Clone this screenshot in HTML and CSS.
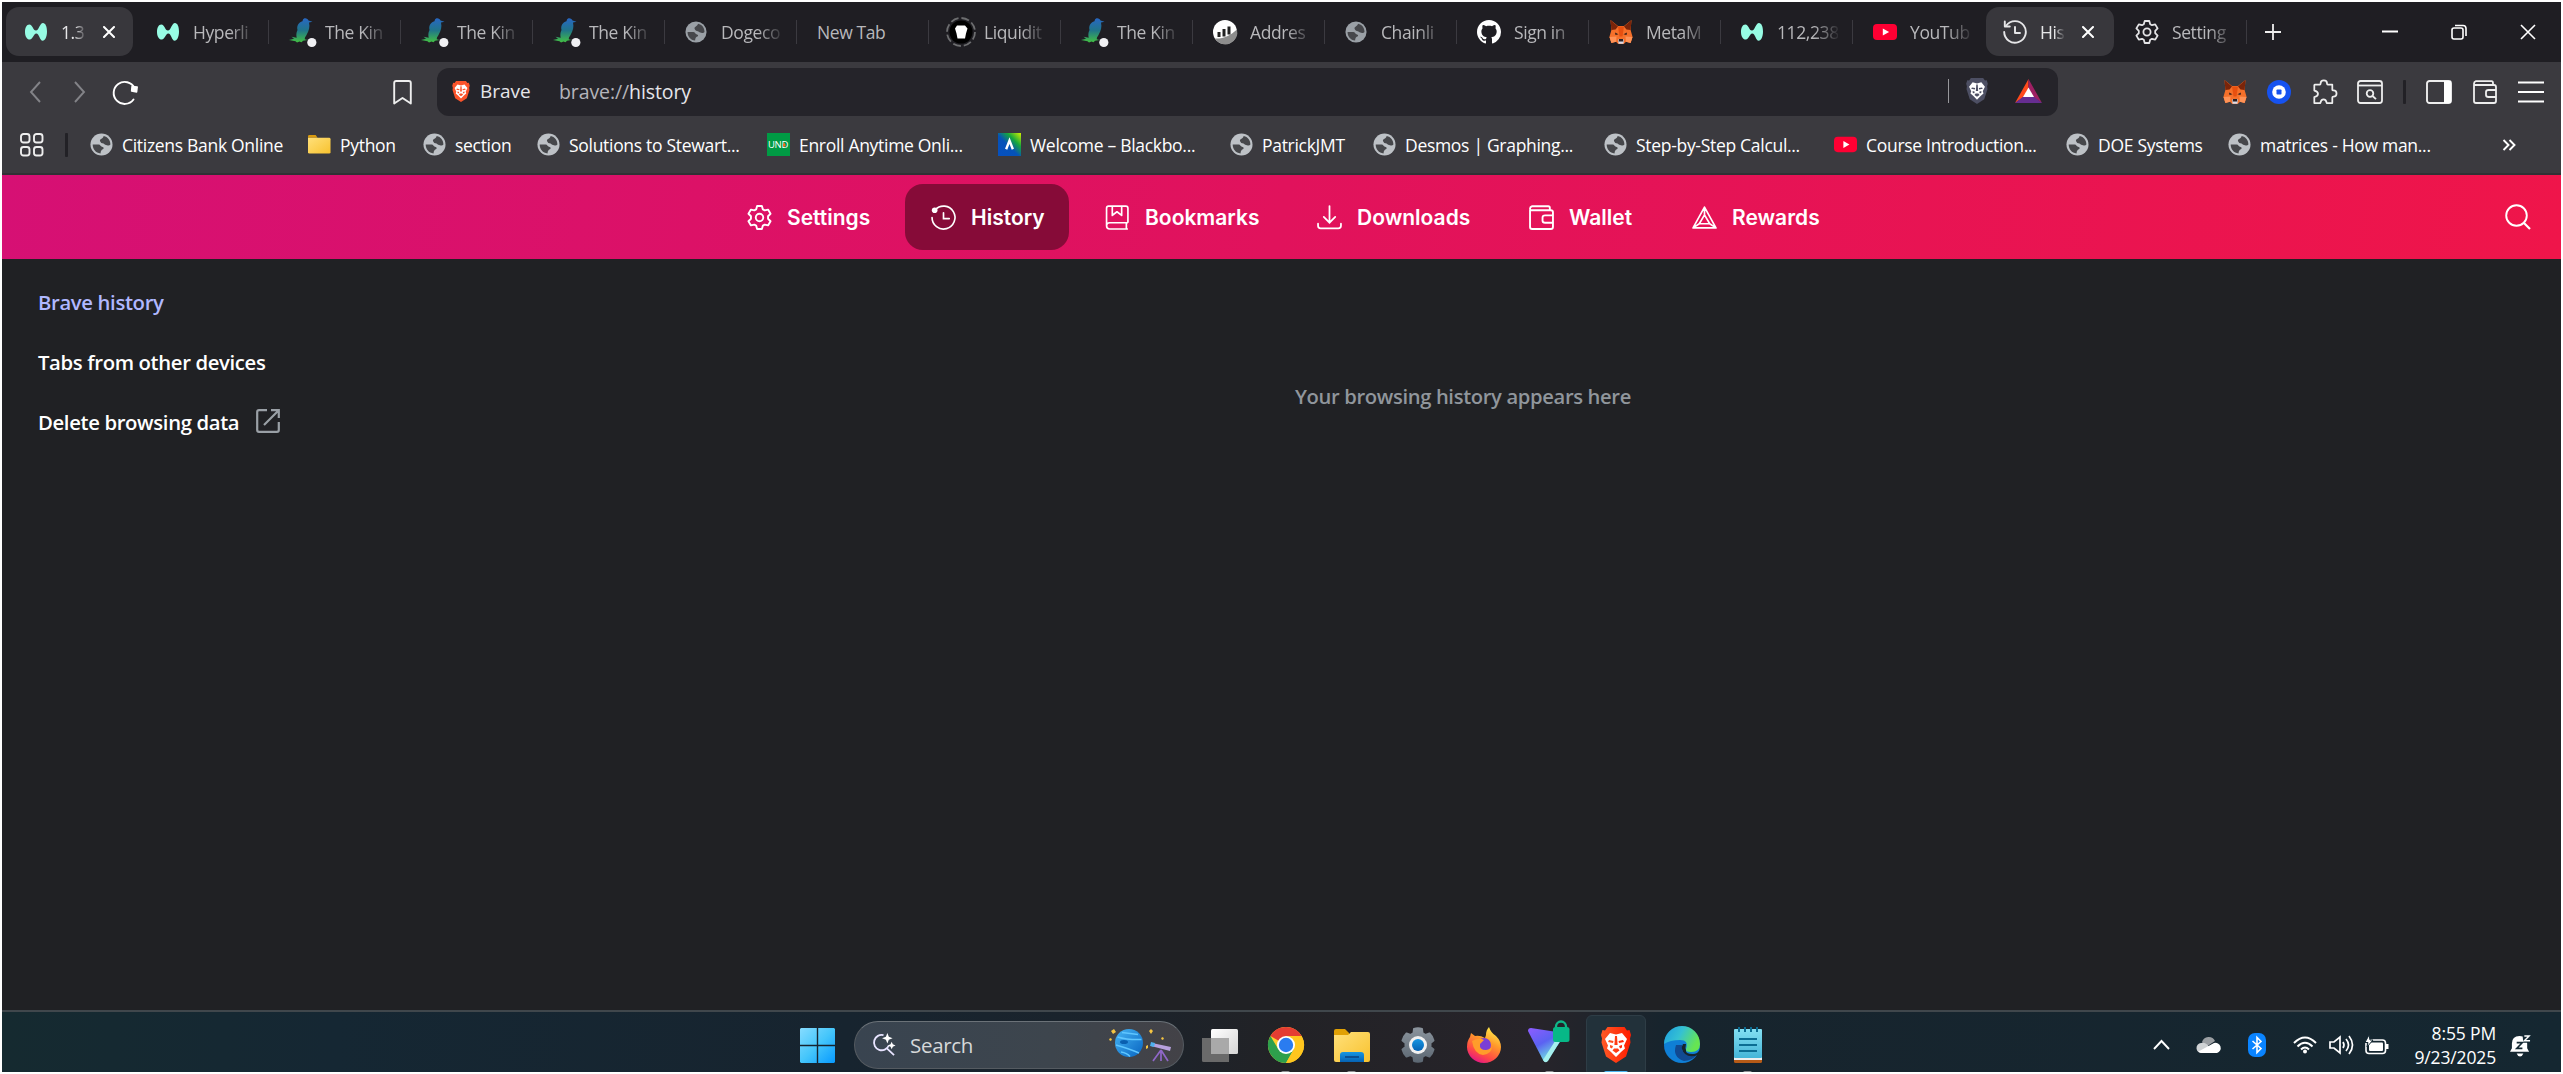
FILE: index.html
```html
<!DOCTYPE html>
<html lang="en">
<head>
<meta charset="utf-8">
<title>History</title>
<link rel="stylesheet" href="styles.css">
</head>
<body>
<svg class="defs" width="0" height="0" aria-hidden="true">
  <defs>
    <linearGradient id="birdFill" x1="0" y1="0" x2="0" y2="1"><stop offset="0" stop-color="#2867c4"/><stop offset=".5" stop-color="#20758a"/><stop offset="1" stop-color="#43c043"/></linearGradient>
    <linearGradient id="folderFill" x1="0" y1="0" x2="1" y2="1"><stop offset="0" stop-color="#ffe07a"/><stop offset="1" stop-color="#f8c22e"/></linearGradient>
    <linearGradient id="winFill" x1="0" y1="0" x2="1" y2="1"><stop offset="0" stop-color="#86dcff"/><stop offset=".5" stop-color="#45c6fb"/><stop offset="1" stop-color="#079aff"/></linearGradient>
    <linearGradient id="blueFill" x1="0" y1="0" x2="0" y2="1"><stop offset="0" stop-color="#1796e2"/><stop offset="1" stop-color="#0562b4"/></linearGradient>
    <linearGradient id="gearFill" x1="0" y1="0" x2="0" y2="1"><stop offset="0" stop-color="#8a939c"/><stop offset="1" stop-color="#5d6873"/></linearGradient>
    <linearGradient id="foxFill" x1=".8" y1="0" x2=".3" y2="1"><stop offset="0" stop-color="#fff44f"/><stop offset=".4" stop-color="#ff9a2a"/><stop offset=".75" stop-color="#ff4a45"/><stop offset="1" stop-color="#e31587"/></linearGradient>
    <linearGradient id="vpnFill" x1="0" y1="0" x2=".6" y2="1"><stop offset="0" stop-color="#8e5cff"/><stop offset=".5" stop-color="#5b62f2"/><stop offset="1" stop-color="#74f3e0"/></linearGradient>
    <linearGradient id="edgeTop" x1="0" y1="0" x2="1" y2=".4"><stop offset="0" stop-color="#1b9de2"/><stop offset=".5" stop-color="#35c1d2"/><stop offset="1" stop-color="#66e552"/></linearGradient>
    <linearGradient id="noteFill" x1="0" y1="0" x2="0" y2="1"><stop offset="0" stop-color="#83dff2"/><stop offset="1" stop-color="#45b5d8"/></linearGradient>
    <linearGradient id="planetFill" x1="0" y1="0" x2="1" y2="1"><stop offset="0" stop-color="#46b5f5"/><stop offset="1" stop-color="#0864c0"/></linearGradient>
    <linearGradient id="boardFill" x1="1" y1="0" x2="0" y2="1"><stop offset="0" stop-color="#d3f000"/><stop offset=".3" stop-color="#16a83c"/><stop offset=".55" stop-color="#0552b8"/><stop offset="1" stop-color="#0650c0"/></linearGradient>
    <linearGradient id="viewFill" x1="0" y1="0" x2="1" y2="1"><stop offset="0" stop-color="#fff"/><stop offset="1" stop-color="#d5d5d5"/></linearGradient>
    <linearGradient id="braveFill" x1="0" y1="0" x2="1" y2="0"><stop offset="0" stop-color="#ff5a26"/><stop offset="1" stop-color="#ff1d00"/></linearGradient>
  </defs>

  <symbol id="hyper" viewBox="0 0 22 22"><path fill="#97fce4" d="M22 10.500c0 5.500-2 9.300-4.300 9.300-3 0-3.500-7.200-6.500-7.200-2.600 0-3.200 6-6.400 6C1.800 18.600 0 15.200 0 11s1.600-7.500 4.300-7.500C7.700 3.500 8 9.600 11 9.600c2.800 0 3.700-7.600 7-7.600 2.400 0 4 3.500 4 8.500z"/></symbol>
  <symbol id="globe" viewBox="0 0 24 24"><circle cx="12" cy="12" r="11.500" fill="currentColor"/><path fill="#46474b" d="M2.800 12H9c2 0 2 2.300 4.200 2.600 1.600.3 1.300 1.800.2 2.400-1.500.8-2.200 1.600-2.400 4.300C6 20.800 2.800 17 2.800 12zM14.300 3.100C18.500 4 21.300 7.500 21.300 12c-.8 1-1.600 1.300-2.700 1-1.200-.5-2.600-.2-3.500-1.300-1-1.200-3.400-.4-4.100-2.200-.5-1.400-1.400-2.300.5-3.300 1.400-.7 2-1.200 2.800-3.100z"/></symbol>
  <symbol id="bird" viewBox="0 0 28 30"><path fill="url(#birdFill)" d="M15.500.3c2-.3 3.400.7 4 2.200l4 1.300-3.500.8c1 4.500.1 8-2.500 12.400l-1.500 2.500-.3 1.700 2.800.7-4.500.9-1.500 1.400-2-.7-2.500.9-1.500-1.200L0 22l5-1.200-2.500-2 5.200 1c-.5-2.500-.6-5 .8-7.800-1-4 1-7.500 5-8.700.2-1.500.9-2.600 2-3z"/><circle cx="22.800" cy="24.500" r="4.600" fill="#f0f0f3"/></symbol>
  <symbol id="octo" viewBox="0 0 16 16"><path fill="#fff" fill-rule="evenodd" d="M8 0C3.580 0 0 3.580 0 8c0 3.540 2.290 6.530 5.470 7.590.4.070.55-.17.55-.38 0-.19-.01-.82-.01-1.490-2.010.37-2.530-.49-2.690-.94-.09-.23-.48-.94-.82-1.130-.28-.15-.68-.52-.01-.53.63-.01 1.080.58 1.230.82.72 1.210 1.870.87 2.330.66.070-.52.28-.87.51-1.070-1.780-.2-3.640-.89-3.640-3.950 0-.87.31-1.590.82-2.150-.08-.2-.36-1.020.08-2.120 0 0 .67-.21 2.200.82.640-.18 1.320-.27 2-.27s1.360.09 2 .27c1.530-1.040 2.200-.82 2.200-.82.440 1.100.16 1.920.08 2.120.51.56.82 1.270.82 2.150 0 3.070-1.870 3.750-3.650 3.950.29.25.54.73.54 1.480 0 1.070-.01 1.930-.01 2.200 0 .21.15.46.55.38A8.010 8.010 0 0 0 16 8c0-4.420-3.580-8-8-8z"/></symbol>
  <symbol id="fox" viewBox="0 0 24 24"><path fill="#f5702a" d="M1.500 0 9 6h6l7.500-6-.9 10 2 7-2 6-4.600-1.300-2.200 2.300H9.200L7 21.700 2.400 23l-2-6 2-7z"/><path fill="#7a2409" d="M1.500 0 9 6.500 6.500 9.500 2.400 10zM22.500 0 15 6.500l2.500 3 4.100.5z"/><path fill="#ff9256" d="M.5 17l7-.5-.4 5.200L2.400 23zM23.500 17l-7-.5.4 5.200 4.700 1.300z"/><path fill="#e8500f" d="M9 6.500h6l-1.500 10h-3z"/><path fill="#301c18" d="M6 12.500l3.500 1.700-3 .8zM18 12.500l-3.500 1.700 3 .8z"/><path fill="#d9dbe8" d="M9 19.500h6l-.6 4.200H9.600z"/><path fill="#2a2024" d="M10 19h4l.4 2.500H9.600z"/></symbol>
  <symbol id="tube" viewBox="0 0 24 24"><rect y="4" width="24" height="16" rx="4" fill="#ff0033"/><path d="M9.800 8.400v7.200l6.300-3.600z" fill="#fff"/></symbol>
  <symbol id="history" viewBox="0 0 24 24"><g fill="none" stroke="currentColor" stroke-width="1.900" stroke-linecap="round" stroke-linejoin="round"><path d="M3.300 5.500A10.800 10.800 0 1 1 1.200 12"/><path d="M1.800 1.500v5h5M12 7v6h5"/></g></symbol>
  <symbol id="gear" viewBox="0 0 24 24"><g fill="none" stroke="currentColor" stroke-width="1.800" stroke-linejoin="round"><path d="M9.700 1h4.600l.9 3.200 1.800 1 3.200-.8 2.400 4-2.400 2.400v2.400l2.400 2.400-2.400 4-3.200-.8-1.800 1-.9 3.200H9.700l-.9-3.200-1.800-1-3.200.8-2.400-4 2.400-2.400v-2.400L1.400 8.400l2.400-4 3.200.8 1.800-1z"/><circle cx="12" cy="12" r="3.600"/></g></symbol>
  <symbol id="x" viewBox="0 0 12 12"><path d="M1 1l10 10M11 1 1 11" stroke="currentColor" stroke-width="2" stroke-linecap="round"/></symbol>
  <symbol id="wallet" viewBox="0 0 24 24"><g fill="none" stroke="currentColor" stroke-width="1.800" stroke-linejoin="round"><path d="M1 4.500V21q0 2 2 2h18q2 0 2-2V7q0-2-2-2H2.500Q1 5 1 3.400T3 1.200h15.500q1.500 0 1.500 1.700V5M23 10h-7.500q-2.500 0-2.500 2v3q0 2 2.500 2H23"/></g></symbol>
  <symbol id="lion" viewBox="0 0 30 36"><path d="M6.500 0h17l2.500 3.500 2.500-.5 1.500 5-1 3.500.5 4-4.500 14L15 36 5 29.500.5 15.500l.5-4L0 8l1.500-5 2.500.5z"/><path fill="#fff" d="M9 6l6 1.500L21 6l5 6-3 6.500 1 3-4 3.500-5 5-5-5-4-3.500 1-3L4 12z"/><path d="M8 13l4.500 1-.5 2-5-1zM22 13l-4.500 1 .5 2 5-1zM13 21.500h4l1.500 2L15 26l-3.500-2.500zM14 9h2l.6 9h-3.200zM9 18l3 1-1 2.500-2-1zM21 18l-3 1 1 2.500 2-1z"/></symbol>
</svg>

<div class="window">
  <header class="tabs">
    <div class="tab first active"><svg class="ic"><use href="#hyper"/></svg><span class="title short">1.3</span><svg class="close"><use href="#x"/></svg></div>
    <div class="tab"><svg class="ic"><use href="#hyper"/></svg><span class="title">Hyperli</span></div>
    <div class="tab"><svg class="bird"><use href="#bird"/></svg><span class="title">The Kin</span></div>
    <div class="tab"><svg class="bird"><use href="#bird"/></svg><span class="title">The Kin</span></div>
    <div class="tab"><svg class="bird"><use href="#bird"/></svg><span class="title">The Kin</span></div>
    <div class="tab"><svg class="ic dim"><use href="#globe"/></svg><span class="title">Dogeco</span></div>
    <div class="tab"><span class="title plain">New Tab</span></div>
    <div class="tab"><svg class="coin" viewBox="0 0 30 30"><circle cx="15" cy="15" r="11.500"/><circle cx="15" cy="15" r="14" fill="none" stroke="#6d6e70" stroke-width="1.800" stroke-dasharray="8 3"/><path fill="#fff" d="M11 8.500h8l2.500 3-1.500 5-1 5h-7.500l-1-5-1.500-5z"/></svg><span class="title">Liquidit</span></div>
    <div class="tab"><svg class="bird"><use href="#bird"/></svg><span class="title">The Kin</span></div>
    <div class="tab"><svg class="ic big" viewBox="0 0 24 24"><circle cx="12" cy="12" r="12" fill="#fff"/><path fill="#8d8d8d" d="M2 18.500C10 19 17 16 24 9.500A12 12 0 0 1 2 18.500z"/><path fill="none" stroke="#222" stroke-width="3" d="M6 17v-5M11 16.500V9M16 14.500v-8"/></svg><span class="title">Addres</span></div>
    <div class="tab"><svg class="ic dim"><use href="#globe"/></svg><span class="title">Chainli</span></div>
    <div class="tab"><svg class="ic big"><use href="#octo"/></svg><span class="title">Sign in</span></div>
    <div class="tab"><svg class="ic big"><use href="#fox"/></svg><span class="title">MetaM</span></div>
    <div class="tab"><svg class="ic"><use href="#hyper"/></svg><span class="title">112,238</span></div>
    <div class="tab bare"><svg class="ic big"><use href="#tube"/></svg><span class="title">YouTub</span></div>
    <div class="tab active here"><svg class="ic big"><use href="#history"/></svg><span class="title short">His</span><svg class="close"><use href="#x"/></svg></div>
    <div class="tab last"><svg class="ic big white"><use href="#gear"/></svg><span class="title">Setting</span></div>
    <svg class="plus" viewBox="0 0 16 16"><path d="M8 0v16M0 8h16" stroke="#eee" stroke-width="1.800"/></svg>
    <div class="caption">
      <svg viewBox="0 0 16 16"><path d="M0 7.500h16" stroke="#fff" stroke-width="2"/></svg>
      <svg viewBox="0 0 16 16"><g fill="none" stroke="#fff" stroke-width="1.600"><rect x="1" y="4" width="11" height="11" rx="2"/><path d="M4 1.500h8q3 0 3 3V12"/></g></svg>
      <svg viewBox="0 0 16 16"><path d="M1 1l14 14M15 1 1 15" stroke="#fff" stroke-width="1.600"/></svg>
    </div>
  </header>

  <div class="toolbar">
    <svg class="chev" viewBox="0 0 12 22"><path d="M11 1 2 11l9 10" fill="none" stroke="#838388" stroke-width="1.900"/></svg>
    <svg class="chev fwd" viewBox="0 0 12 22"><path d="m1 1 9 10L1 21" fill="none" stroke="#838388" stroke-width="1.900"/></svg>
    <svg class="reload" viewBox="0 0 26 24"><path d="M21.500 19.500A11 11 0 1 1 22.500 8" fill="none" stroke="#fff" stroke-width="1.900" stroke-linecap="round"/><path d="M20 6.500l5.200.5-.6 5-5-1z" fill="#fff" stroke="#fff" stroke-width="1.500" stroke-linejoin="round"/></svg>
    <svg class="mark" viewBox="0 0 19 25"><path d="M1.200 3q0-2 2-2h12.600q2 0 2 2v20.500L9.500 18l-8.300 5.500z" fill="none" stroke="#eee" stroke-width="1.900" stroke-linejoin="round"/></svg>
    <div class="address">
      <svg class="shield" fill="#fb542b"><use href="#lion"/></svg>
      <span class="brand">Brave</span>
      <span class="url">brave://<b>history</b></span>
      <i class="rule"></i>
      <svg class="greylion" fill="#4d4f63"><use href="#lion"/></svg>
      <svg class="bat" viewBox="0 0 27 24"><path fill="#ff4a1c" d="M13.500 0 0 24l9.500-6.500 4-8z"/><path fill="#9e1f63" d="M13.500 0 27 24l-9.500-6.500-4-8z"/><path fill="#662d91" d="M0 24h27l-9-7H9z"/><path fill="#fff" d="M13.500 8.500 19 18H8z"/></svg>
    </div>
    <div class="extensions">
      <svg><use href="#fox"/></svg>
      <svg viewBox="0 0 24 24"><circle cx="12" cy="12" r="12" fill="#1652f0"/><circle cx="12" cy="12" r="6.800" fill="#fff"/><rect x="9.500" y="9.500" width="5" height="5" rx=".8" fill="#1652f0"/></svg>
      <svg class="wide" viewBox="0 0 26 26"><path d="M3 5h5.500q.8 0 .8-1.200a3.500 3.500 0 0 1 7 0q0 1.200.8 1.200H22v5.500q0 .8 1.200.8a3.300 3.300 0 0 1 0 6.800q-1.200 0-1.200.8V25H16q-.8-4-3.500-4T9 25H2.500v-6.500q4-.8 4-3.500t-4-3.500V5.500z" fill="none" stroke="#eee" stroke-width="1.900" stroke-linejoin="round"/></svg>
      <svg class="wide" viewBox="0 0 26 24"><g fill="none" stroke="#eee" stroke-width="1.800"><rect x="1" y="1" width="24" height="22" rx="2.500"/><path d="M1 5.500h24"/><circle cx="13" cy="13.500" r="3.300"/><path d="m15.500 16 3.500 3.200"/></g></svg>
      <i class="split"></i>
      <svg class="wide" viewBox="0 0 26 24"><rect x="1" y="1" width="24" height="22" rx="2.500" fill="none" stroke="#eee" stroke-width="1.900"/><path d="M18 1h7v22h-7z" fill="#fff"/></svg>
      <svg class="wide wal"><use href="#wallet"/></svg>
      <svg class="wide" viewBox="0 0 26 24"><path d="M0 2.500h26M0 12h26M0 21.500h26" stroke="#fff" stroke-width="1.900"/></svg>
    </div>
  </div>

  <nav class="bookmarks">
    <svg class="apps" viewBox="0 0 24 24"><g fill="none" stroke="#eee" stroke-width="1.900"><rect x="1" y="1" width="8.500" height="8.500" rx="2.500"/><rect x="14" y="1" width="8.500" height="8.500" rx="2.500"/><rect x="1" y="14" width="8.500" height="8.500" rx="2.500"/><rect x="14" y="14" width="8.500" height="8.500" rx="2.500"/></g></svg>
    <i class="split"></i>
    <a><svg><use href="#globe"/></svg>Citizens Bank Online</a>
    <a><svg viewBox="0 0 24 22"><path fill="#d99a10" d="M0 2.500Q0 1 1.500 1H8l2 3H0z"/><path fill="url(#folderFill)" d="M0 4h22q1.500 0 1.500 1.500V19q0 1.500-1.500 1.500H1.500Q0 20.500 0 19z"/></svg>Python</a>
    <a><svg><use href="#globe"/></svg>section</a>
    <a><svg><use href="#globe"/></svg>Solutions to Stewart...</a>
    <a><svg viewBox="0 0 24 24"><rect width="24" height="24" fill="#009a44"/><text x="1" y="16" class="und" textLength="21" lengthAdjust="spacingAndGlyphs">UND</text><path fill="#ff671f" d="M17 14q-1-1.500 1-4 2 2.500 1 4z"/></svg>Enroll Anytime Onli...</a>
    <a><svg viewBox="0 0 24 24"><rect width="24" height="24" fill="url(#boardFill)"/><path d="m8.500 17 3.500-9 3.500 9" fill="none" stroke="#fff" stroke-width="2.500"/></svg>Welcome – Blackbo...</a>
    <a><svg><use href="#globe"/></svg>PatrickJMT</a>
    <a><svg><use href="#globe"/></svg>Desmos | Graphing...</a>
    <a><svg><use href="#globe"/></svg>Step-by-Step Calcul...</a>
    <a><svg><use href="#tube"/></svg>Course Introduction...</a>
    <a><svg><use href="#globe"/></svg>DOE Systems</a>
    <a><svg><use href="#globe"/></svg>matrices - How man...</a>
    <svg class="more" viewBox="0 0 14 12"><path d="m1.500 1 5 5-5 5m6-10 5 5-5 5" fill="none" stroke="#fff" stroke-width="1.900"/></svg>
  </nav>

  <div class="sections">
    <a><svg><use href="#gear"/></svg>Settings</a>
    <a class="current"><svg viewBox="0 0 24 24"><g fill="none" stroke="#fff" stroke-width="1.600" stroke-linecap="round"><path d="M4 4.500A11 11 0 1 1 1 12M12 7.500V13h5.500"/></g><circle cx="3.500" cy="5" r="2.700" fill="#fff"/></svg>History</a>
    <a><svg viewBox="0 0 24 24"><g fill="none" stroke="#fff" stroke-width="1.600" stroke-linejoin="round"><path d="M22 17V3q0-2-2-2H3.500q-2 0-2 2v17M22 17H4.500q-3 0-3 3t3 3H22M20.500 17v6M7 1v9l4.500-3.500L16 10V1"/></g></svg>Bookmarks</a>
    <a><svg viewBox="0 0 24 24"><path d="M12 1v16m-5.500-5.500L12 17l5.500-5.500M1 18v2q0 2.500 2.500 2.500h17q2.500 0 2.500-2.500v-2" fill="none" stroke="#fff" stroke-width="1.700" stroke-linecap="round"/></svg>Downloads</a>
    <a><svg><use href="#wallet"/></svg>Wallet</a>
    <a><svg viewBox="0 0 24 24"><g fill="none" stroke="#fff" stroke-width="1.600" stroke-linejoin="round"><path d="M12 2 1 22h22zM12 9.500 7 18h10zM12 2v7.500M1 22l6-4M23 22l-6-4"/></g></svg>Rewards</a>
    <svg class="find" viewBox="0 0 26 26"><circle cx="11.500" cy="11.500" r="10.300" fill="none" stroke="#fff" stroke-width="1.900"/><path d="m19 19 6 6" stroke="#fff" stroke-width="2.200"/></svg>
  </div>

  <main class="page">
    <aside class="side">
      <a class="sel">Brave history</a>
      <a>Tabs from other devices</a>
      <a>Delete browsing data<svg viewBox="0 0 24 24"><path d="M11 1.200H3q-1.800 0-1.800 1.800v18q0 1.800 1.800 1.800h18q1.800 0 1.800-1.800v-8M15 1.200h7.800V9M22.500 1.500 8 16" fill="none" stroke="#9aa0a6" stroke-width="2.200"/></svg></a>
    </aside>
    <p class="empty">Your browsing history appears here</p>
  </main>

  <footer class="taskbar">
    <svg class="start" viewBox="0 0 35 35"><path fill="url(#winFill)" d="M1 0h15.800v16.800H0V1zM18.200 0H34l1 1v15.800H18.200zM0 18.200h16.800V35H1l-1-1zM18.200 18.200H35V34l-1 1H18.200z"/></svg>
    <div class="search">
      <svg class="glass" viewBox="0 0 25 25"><g fill="none" stroke="#e8e4ff" stroke-width="1.900"><path d="M12 2.200A8 8 0 1 0 17.500 13M15.500 16l7.500 7"/></g><path fill="#fff" d="m16 0 1.500 4L21.500 5.500l-4 1.500-1.500 4-1.500-4-4-1.500 4-1.500zM20.500 9l1.200 2.800 2.800 1.200-2.800 1.200-1.200 2.800-1.200-2.800-2.800-1.200 2.800-1.200z"/></svg>
      <span>Search</span>
      <svg class="sky" viewBox="0 0 64 34"><circle cx="21" cy="15" r="14" fill="url(#planetFill)"/><path d="M9.500 9q10 3 24 2.500M8 17q14 4 23 8M13 24q6 1 9 4.500M14 4.500q8 1 16 2" stroke="#5fc6ff" stroke-width="1.500" fill="none"/><ellipse cx="16" cy="14" rx="4" ry="2" fill="#0a5fb0"/><g fill="#f5c542"><path d="m6 1 2 3-3 2-2-3zM43 1l2 2-2 3-2-3zM1 11l2-1 1 2-2 1zM54 9l2 1-1 2-2-1zM38 18l2-1v3l-2 1z"/></g><path d="m44 15 19 4-1 4-19-5z" fill="#b7a1dd"/><path d="m43 14 4 1-1 4-4-1z" fill="#4db0ee"/><path d="m53 22-8 11m8-11 7 11m-7-11v11" stroke="#8f67c8" stroke-width="1.700"/></svg>
    </div>
    <div class="app"><svg viewBox="0 0 36 36"><rect x="9" y="2" width="27" height="25" rx="1.500" fill="url(#viewFill)"/><path fill="#6a6a6a" d="M0 11h9v16h18v8H1.500Q0 35 0 33.500z"/><path fill="#a9a9a9" d="M9 11h18v16H9z"/></svg></div>
    <div class="app run"><svg viewBox="0 0 36 36"><circle cx="18" cy="18" r="18" fill="#ffcf2e"/><path fill="#e43d33" d="M18 18 2.400 9A18 18 0 0 1 33.600 9z"/><path fill="#2ea04c" d="M18 36A18 18 0 0 1 2.400 9L10.500 22.500 25.500 22.500z"/><path fill="#ffc61e" d="M18 9h15.600A18 18 0 0 1 18 36l8-13.500z"/><circle cx="18" cy="18" r="9" fill="#fff"/><circle cx="18" cy="18" r="7.200" fill="#2a7cf0"/></svg></div>
    <div class="app run"><svg viewBox="0 0 36 36"><path fill="#e0a004" d="M0 4q0-2 2-2h9l4 4v4H0z"/><path fill="url(#folderFill)" d="M0 8h14l3-3h17q2 0 2 2v26q0 2-2 2H2q-2 0-2-2z"/><path fill="url(#blueFill)" d="M6 35v-7q0-3 3-3h18q3 0 3 3v7z"/><path d="M11 30h14" stroke="#0b4f91" stroke-width="2"/></svg></div>
    <div class="app"><svg viewBox="0 0 36 36"><path fill="url(#gearFill)" stroke="url(#gearFill)" stroke-width="2" stroke-linejoin="round" d="m13.500 6 .5-4q4-1.500 8 0l.5 4 3 2 4-1.500q3 3 4 7L30.500 16v4l3 2.500q-1 4-4 7l-4-1.500-3 2-.5 4q-4 1.500-8 0l-.5-4-3-2-4 1.500q-3-3-4-7L5.500 20v-4l-3-2.500q1-4 4-7l4 1.500z"/><circle cx="18" cy="18" r="9" fill="#f1f1f1"/><circle cx="18" cy="18" r="6" fill="url(#blueFill)"/></svg></div>
    <div class="app"><svg viewBox="0 0 36 36"><path fill="url(#foxFill)" d="M20 8q0-5 3-8 2 6 7 9 5 5 5 11a17 16 0 0 1-34 0q0-6 3-10l1-4 4 3q5-1 10 2z"/><circle cx="18" cy="18" r="7" fill="#7a3fd6"/><path fill="#ff9d2b" d="M6 14q7-4 12-1l-4 4q-1 6 6 6 5-1 6-4 0 8-9 9-9-1-11-14z"/></svg></div>
    <div class="app run vpn"><svg viewBox="0 0 44 44"><path fill="url(#vpnFill)" d="M0 11q0-3 3-3l26 4 7 4-17 25q-2 2-4-1L1 13z"/><path fill="#a5f0ee" d="m34 18-5 0-14 22q2 4 5 1z"/><path d="M28 9V6.500a5 5 0 0 1 10 0V9" fill="none" stroke="#10b889" stroke-width="2.300"/><rect x="25" y="7" width="16.500" height="15" rx="2.500" fill="#07b887"/></svg></div>
    <div class="app run focus"><svg class="br" fill="url(#braveFill)"><use href="#lion"/></svg></div>
    <div class="app"><svg viewBox="0 0 36 36"><circle cx="18" cy="18" r="18" fill="#0f7fd6"/><path fill="url(#edgeTop)" d="M0 17A18 18 0 0 1 36 17q0 8-9 8-6 0-5-3 3-9-6-9-10 0-16 4z"/><path fill="#114a92" d="M12 18q-4 12 8 16 8 0 14-7-4 3-10 1-7-2-6-10z"/><path fill="#17242c" d="M22 17q-1 4 0 6-1 4 7 4 4 0 6-3l2 4-3 0q-8 3-13-1-5-5-2-10z"/></svg></div>
    <div class="app run"><svg viewBox="0 0 36 36"><rect x="4" y="3" width="28" height="33" rx="1.500" fill="#b55a17"/><rect x="4" y="3" width="28" height="30" fill="#eee"/><rect x="4" y="2" width="28" height="29" rx="1" fill="url(#noteFill)"/><path d="M9 0v5M15 0v5M21 0v5M27 0v5M9 12h18M9 18h18M9 24h18" stroke="#0c6d93" stroke-width="2"/></svg></div>
    <div class="tray">
      <svg class="up" viewBox="0 0 17 10"><path d="m1 9 7.500-8L16 9" fill="none" stroke="#fff" stroke-width="1.900"/></svg>
      <svg class="cloud" viewBox="0 0 24 16"><path fill="#9b9fa3" d="M5 5a7 7 0 0 1 13-1l-9 6z"/><path fill="#cfd2d4" d="M5 16a5 5 0 0 1-1-10q5-1 8 4z"/><path fill="#fff" d="M5 16q-2 0-3.500-1.500L17 6a5 5 0 0 1 3 10z"/></svg>
      <svg class="bt" viewBox="0 0 18 24"><rect width="18" height="24" rx="7" fill="#0a84ff"/><path d="m4.500 8 8.500 7.500-4 4v-15l4 4L4.500 16" fill="none" stroke="#fff" stroke-width="1.600"/></svg>
      <svg class="wifi" viewBox="0 0 24 18"><g fill="none" stroke="#fff" stroke-width="2"><path d="M1 7q11-11 22 0M4.500 10.500q7.500-7.500 15 0M8 13.500q4-4 8 0"/></g><circle cx="12" cy="15.500" r="2" fill="#fff"/></svg>
      <svg class="vol" viewBox="0 0 24 20"><path d="M1 7h4l6-5v16l-6-5H1zM14 7q2 3 0 6M17 4q5 6 0 12M20 1q7 9 0 18" fill="none" stroke="#fff" stroke-width="1.700"/></svg>
      <svg class="bat2" viewBox="0 0 24 20"><rect x="1" y="5" width="19.500" height="13.500" rx="3" fill="none" stroke="#fff" stroke-width="1.600"/><rect x="4" y="7.500" width="14" height="8.500" rx="1" fill="#fff"/><path fill="#fff" d="M21 9h2.500v5H21z"/><path fill="#fff" stroke="#142833" stroke-width="1" d="M4 0 0 7.500h3L2 12l6-7H5z"/></svg>
      <div class="clock"><span>8:55 PM</span><span>9/23/2025</span></div>
      <svg class="bell" viewBox="0 0 22 24"><path fill="#fff" d="M0 18.500 2 15V10Q2 2 10 2t8 8v5l2 3.500zM7 20.500h7q-1 3-3.500 3T7 20.500z"/><path d="M7 9h6l-6 6h6" fill="none" stroke="#142833" stroke-width="1.600"/><path fill="#142833" d="M13 0h9v9h-8z"/><path d="M15 2h5l-5 5h6" fill="none" stroke="#fff" stroke-width="1.500"/></svg>
    </div>
  </footer>
</div>
</body>
</html>
```
FILE: styles.css
```css
* { box-sizing: border-box; }
body { margin: 0; background: #fff; font-family: "Open Sans", "Noto Sans", sans-serif; color: #fff; }
.defs { display: block; width: 0; height: 0; }
svg { display: block; flex: none; overflow: visible; }
.window { width: 2563px; height: 1074px; border: 2px solid #fff; display: flex; flex-direction: column; overflow: hidden; background: #202124; }

.tabs { height: 60px; flex: none; display: flex; align-items: center; padding: 0 0 1px 4px; background: #1f1e23; }
.tab { width: 132px; height: 49px; flex: none; display: flex; align-items: center; padding-left: 20px; position: relative; color: #b8b8bb; }
.tab::after { content: ""; position: absolute; right: 0; top: 13px; width: 1px; height: 24px; background: #3b3a40; }
.tab.first::after, .tab.bare::after, .tab.here::after { display: none; }
.tab.first { width: 127px; margin-right: 4px; padding-left: 19px; }
.tab.active { background: #38373c; border-radius: 13px; color: #e6e6e8; }
.tab.here { width: 128px; margin: 0 1px 0 1px; padding-left: 17px; }
.ic { width: 22px; height: 22px; margin-right: 14px; }
.ic.big { width: 24px; height: 24px; margin-right: 13px; }
.ic.dim { color: #9aa0a6; }
.ic.white { color: #e4e4e6; }
.bird { width: 28px; height: 30px; margin: 3px 8px 0 0; }
.coin { width: 30px; height: 30px; margin: 0 8px 0 -3px; }
.title { width: 61px; white-space: nowrap; font-size: 17.500px; letter-spacing: -.4px; -webkit-mask-image: linear-gradient(90deg, #000 60%, rgba(0, 0, 0, .1)); mask-image: linear-gradient(90deg, #000 60%, rgba(0, 0, 0, .1)); }
.title.short { width: 24px; }
.title.plain { width: 80px; -webkit-mask-image: none; mask-image: none; }
.close { width: 12px; height: 12px; margin-left: 18px; color: #fff; }
.plus { width: 16px; height: 16px; margin-left: 18px; }
.caption { margin: 0 25px 0 auto; display: flex; gap: 53px; }
.caption svg { width: 16px; height: 16px; }

.toolbar { height: 58px; flex: none; display: flex; align-items: center; background: #3b3a3f; padding: 2px 17px 0 27px; }
.chev { width: 12px; height: 22px; }
.fwd { margin-left: 33px; }
.reload { width: 26px; height: 24px; margin-left: 26px; }
.mark { width: 19px; height: 25px; margin-left: 255px; }
.address { width: 1621px; height: 48px; margin-left: 25px; border-radius: 12px; background: #25242a; display: flex; align-items: center; padding: 0 16px 2px 15px; }
.shield { width: 18px; height: 21px; }
.brand { width: 79px; margin-left: 10px; font-size: 19px; color: #e6e6ea; }
.url { font-size: 19.500px; letter-spacing: -.1px; color: #b4b4ba; }
.url b { font-weight: 400; color: #e6e6ea; }
.rule { width: 1px; height: 24px; margin-left: auto; background: #98989c; }
.greylion { width: 22px; height: 26px; margin-left: 17px; }
.bat { width: 27px; height: 24px; margin-left: 27px; }
.extensions { margin-left: auto; display: flex; align-items: center; gap: 20px; }
.extensions svg { width: 24px; height: 24px; }
.extensions .wide { width: 26px; }
.extensions .wal { color: #eee; }
.split { width: 3px; height: 24px; background: #222126; border-radius: 1px; }

.bookmarks { height: 55px; flex: none; display: grid; grid-template-columns: 45px 25px 218px 115px 114px 230px 231px 232px 143px 231px 230px 232px 162px 274px 14px; align-items: center; padding: 0 0 4px 18px; background: #3b3a3f; border-bottom: 2px solid #303034; }
.bookmarks a { display: flex; align-items: center; gap: 9px; font-size: 17.500px; letter-spacing: -.3px; white-space: nowrap; color: #fff; }
.bookmarks a svg { width: 23px; height: 23px; color: #bdc1c6; }
.bookmarks .apps { width: 24px; height: 24px; }
.bookmarks .more { width: 14px; height: 12px; }
.und { font: 10px "Open Sans", sans-serif; fill: #fff; }

.sections { height: 84px; flex: none; display: grid; grid-template-columns: 174px 164px 202px 202px 153px 177px auto; gap: 10px; align-items: center; padding: 0 44px 0 719px; background: linear-gradient(100deg, #d61074, #e1125c 50%, #ef154a); }
.sections a { height: 66px; border-radius: 18px; padding-left: 26px; display: flex; align-items: center; gap: 15px; font: 600 21px Inter, sans-serif; }
.sections a svg { width: 25px; height: 25px; }
.sections .current { background: #860b38; }
.sections .find { width: 26px; height: 26px; justify-self: end; margin-right: -14px; }

.page { flex: 1; display: grid; grid-template-columns: 363px 1fr; }
.side { padding: 13px 0 0 36px; }
.side a { height: 60px; display: flex; align-items: center; font-size: 20.300px; font-weight: 600; letter-spacing: -.35px; white-space: nowrap; }
.side svg { width: 24px; height: 24px; margin: -2px 0 0 17px; }
.side .sel { color: #b0b8ff; }
.empty { margin: 122px 0 0; text-align: center; font-size: 20.200px; line-height: 30px; font-weight: 600; letter-spacing: -.35px; color: #90969c; }

.taskbar { height: 62px; flex: none; display: flex; align-items: center; padding: 6px 30px 0 798px; border-top: 2px solid #40474c; background: linear-gradient(90deg, #152a30, #152733 13%, #17242f 33%, #1b232b 44%, #222226 50%, #27242a 60%, #17242d 65%, #152731); }
.start { width: 35px; height: 35px; margin-top: 1px; }
.search { width: 330px; height: 48px; margin-left: 19px; border: 1px solid #555b61; border-top-color: #6b7278; border-radius: 24px; background: linear-gradient(90deg, #394450, #3d454d 60%, #434247); display: flex; align-items: center; padding: 0 11px 0 17px; font-size: 20.500px; letter-spacing: -.3px; color: #d6d8da; }
.glass { width: 24px; height: 24px; margin-right: 14px; }
.sky { width: 64px; height: 34px; margin-left: auto; }
.app { width: 66px; height: 62px; flex: none; display: flex; align-items: center; justify-content: center; position: relative; }
.search + .app { margin-left: 3px; }
.app svg { width: 36px; height: 36px; }
.app .br { width: 30px; height: 36px; }
.app.vpn svg { width: 44px; height: 44px; margin-top: -6px; }
.app.run::after { content: ""; position: absolute; left: 28px; bottom: 3px; width: 9px; height: 2px; background: #8f9093; border-radius: 2px 2px 0 0; }
.focus::before { content: ""; position: absolute; inset: 1px 3px 0; border: 1px solid #2e3d46; border-radius: 6px; background: #22313a; }
.focus svg { position: relative; }
.app.focus::after { left: 21px; width: 24px; background: #4cb8f5; }
.tray { margin-left: auto; display: flex; align-items: center; }
.up { width: 17px; height: 10px; }
.cloud { width: 24px; height: 16px; margin-left: 27px; }
.bt { width: 18px; height: 24px; margin-left: 27px; }
.wifi { width: 24px; height: 18px; margin-left: 27px; }
.vol { width: 24px; height: 20px; margin-left: 12px; }
.bat2 { width: 24px; height: 20px; margin-left: 12px; }
.clock { width: 107px; display: flex; flex-direction: column; text-align: right; font-size: 17.500px; line-height: 24px; letter-spacing: -.15px; white-space: nowrap; }
.bell { width: 21px; height: 23px; margin-left: 14px; }
```
